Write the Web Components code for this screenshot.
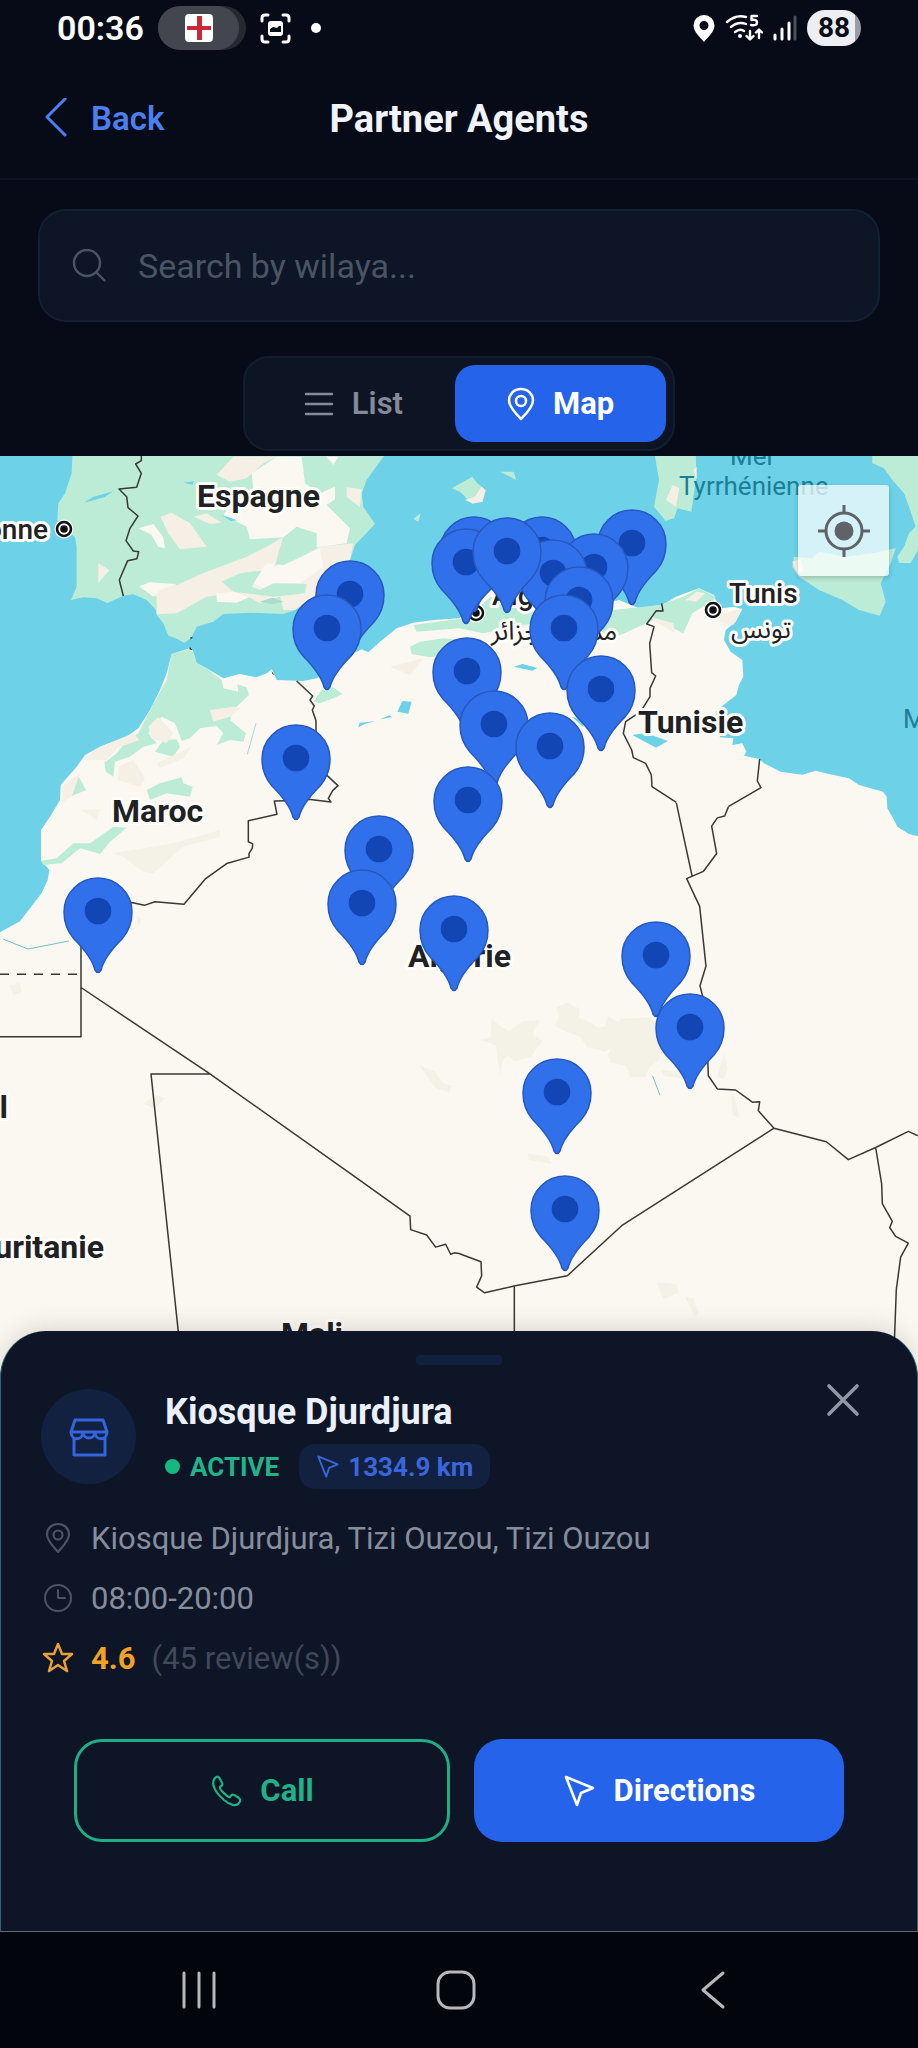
<!DOCTYPE html>
<html lang="en">
<head>
<meta charset="utf-8">
<meta name="viewport" content="width=device-width, initial-scale=1">
<title>Partner Agents</title>
<style>
  html, body { margin: 0; height: 100%; }
  body { background: #060b17; color: #eef2ff; font-family: Roboto, "Liberation Sans", "DejaVu Sans", sans-serif; }
</style>
</head>
<body>
<app-screen>
  <status-bar slot="status" time="00:36" battery="88"></status-bar>
  <page-header slot="header">Partner Agents</page-header>
  <search-field slot="tools" placeholder="Search by wilaya..."></search-field>
  <view-toggle slot="tools"></view-toggle>
  <coverage-map slot="map"></coverage-map>
  <agent-sheet slot="sheet">
    <span slot="name">Kiosque Djurdjura</span>
    <span slot="status">ACTIVE</span>
    <span slot="distance">1334.9 km</span>
    <span slot="address">Kiosque Djurdjura, Tizi Ouzou, Tizi Ouzou</span>
    <span slot="hours">08:00-20:00</span>
    <span slot="rating">4.6</span>
    <span slot="reviews">(45 review(s))</span>
  </agent-sheet>
  <nav-bar slot="nav"></nav-bar>
</app-screen>

<script>
const BASE = `
  :host, *, *::before, *::after { box-sizing: border-box; }
  svg { display: block; flex: none; }
  button { font: inherit; color: inherit; background: none; border: 0; padding: 0; margin: 0; cursor: pointer; }
  .line { fill: none; stroke: currentColor; stroke-linecap: round; stroke-linejoin: round; }
`;
function define(name, render, setup) {
  customElements.define(name, class extends HTMLElement {
    constructor() {
      super();
      const root = this.attachShadow({ mode: 'open' });
      const t = document.createElement('template');
      t.innerHTML = `<style>${BASE}</style>` + render(this);
      root.append(t.content.cloneNode(true));
      if (setup) setup(root, this);
    }
  });
}

define('app-screen', () => `
  <style>
    :host { display: flex; flex-direction: column; min-height: 100vh; }
    .tools { display: flex; flex-direction: column; align-items: center; gap: 34px; padding: 29px 38px 5px; }
    .stage { flex: 1; display: grid; grid-template: minmax(0, 1fr) / minmax(0, 1fr); overflow: hidden; }
    ::slotted([slot=map]), ::slotted([slot=sheet]) { grid-area: 1 / 1; }
    ::slotted([slot=sheet]) { align-self: end; z-index: 1; }
  </style>
  <slot name="status"></slot>
  <slot name="header"></slot>
  <div class="tools"><slot name="tools"></slot></div>
  <main class="stage"><slot name="map"></slot><slot name="sheet"></slot></main>
  <slot name="nav"></slot>
`);

define('status-bar', el => `
  <style>
    :host { display: flex; justify-content: space-between; align-items: center; height: 56px; padding: 0 57px; color: #fff; }
    .group { display: flex; align-items: center; }
    time { font-size: 34px; font-weight: 600; line-height: 40px; width: 101px; }
    .pill { display: flex; width: 88px; height: 44px; border-radius: 22px; background: #262932; margin-right: 14px; }
    .pill div { width: 81px; border-radius: 22px; background: #44464f; display: grid; place-items: center; }
    .dot { width: 10px; height: 10px; border-radius: 50%; background: #fff; margin-left: 20px; }
    .right { gap: 10px; }
    .battery { width: 54px; height: 36px; border-radius: 18px; display: grid; place-items: center; color: #0a0d16;
      background: linear-gradient(90deg, #eceef3 88%, #9b9da5 88%); font-size: 28px; font-weight: 700; line-height: 36px; }
  </style>
  <div class="group">
    <time>${el.getAttribute('time')}</time>
    <div class="pill"><div>
      <svg width="28" height="28" viewBox="0 0 28 28"><rect width="28" height="28" rx="4" fill="#fdfdfd"/><path d="M12 2h5v10h9v4h-9v10h-5V16H2v-4h10z" fill="#c9273a"/></svg>
    </div></div>
    <svg width="31" height="31" viewBox="0 0 31 31"><g class="line" stroke-width="3"><path d="M2 8V5q0-3 3-3h3M23 2h3q3 0 3 3v3M29 23v3q0 3-3 3h-3M8 29H5q-3 0-3-3v-3"/></g><rect x="8" y="8" width="15" height="15" rx="3" fill="#fff"/><path d="M10 19v-3l3-2 4 1 2-2h2v6z" fill="#0a0f1c"/></svg>
    <div class="dot"></div>
  </div>
  <div class="group right">
    <svg width="22" height="27" viewBox="0 0 22 27"><path fill="#fff" fill-rule="evenodd" d="M11 0a10.500 10.500 0 0 1 10.500 10.500C21.500 17 15 22 11 27 7 22 .5 17 .5 10.500A10.500 10.500 0 0 1 11 0zm0 6a4.500 4.500 0 1 0 0 9 4.500 4.500 0 0 0 0-9z"/></svg>
    <svg width="38" height="28" viewBox="0 0 38 28"><g class="line" stroke-width="2.400"><path d="M2 8q9-8 19-5M6 13q7-6 15-3M10 18q5-4 9-1"/><path d="M32 2h-5.500v4q5.500-1 5.500 2.500T26 11"/><path d="M25 17v8M21.500 22l3.500 3.500 3.500-3.500M34 24v-8M31 18.500 34 15.500l3 3"/></g><circle cx="15" cy="22" r="2" fill="#fff"/></svg>
    <svg width="24" height="26" viewBox="0 0 24 26"><g stroke-width="3" stroke-linecap="round" stroke="#fff"><path d="M2 20v4M9 14v10M16 8v16"/><path d="M22 2v22" stroke="#4c505b"/></g></svg>
    <div class="battery">${el.getAttribute('battery')}</div>
  </div>
`);

define('page-header', () => `
  <style>
    :host { display: grid; grid-template-columns: 1fr auto 1fr; align-items: center; height: 124px; padding: 4px 38px 0; border-bottom: 2px solid #0b1522; }
    button { display: flex; align-items: center; gap: 24px; padding-left: 6px; justify-self: start; color: #4b7ff0; font-size: 33px; font-weight: 600; line-height: 40px; }
    h1 { margin: 0; font-size: 38px; font-weight: 700; line-height: 44px; color: #f1f4ff; }
  </style>
  <button type="button"><svg width="23" height="42" viewBox="0 0 23 42"><path class="line" stroke-width="3" d="M21 1 3 19l18 18"/></svg>Back</button>
  <h1><slot></slot></h1>
`);

define('search-field', el => `
  <style>
    :host { display: block; align-self: stretch; }
    label { display: flex; align-items: center; gap: 32px; height: 113px; padding: 0 32px; border: 2px solid #132034; border-radius: 28px; background: #0d1526; color: #4b5465; }
    input { flex: 1; min-width: 0; border: 0; padding: 0; background: none; outline: none; font: inherit; font-size: 34px; line-height: 40px; height: 44px; color: #eef2ff; }
    input::placeholder { color: #4b5465; opacity: 1; }
  </style>
  <label><svg width="34" height="34" viewBox="0 0 34 34"><g class="line" stroke-width="2.400"><circle cx="15" cy="14" r="13"/><path d="m24.500 23.500 8 8"/></g></svg>
  <input type="search" aria-label="Search by wilaya" placeholder="${el.getAttribute('placeholder')}"></label>
`);

define('view-toggle', () => `
  <style>
    :host { display: flex; height: 95px; padding: 7px; border: 2px solid #121d32; border-radius: 26px; background: #0d1424; }
    button { display: flex; align-items: center; justify-content: center; gap: 18px; padding: 0 52px; border-radius: 20px; font-size: 31px; font-weight: 600; line-height: 40px; color: #848a98; }
    [aria-pressed=true] { background: #2563eb; color: #fff; font-weight: 700; }
  </style>
  <button type="button" aria-pressed="false"><svg width="30" height="26" viewBox="0 0 30 26"><path class="line" stroke-width="2.500" d="M2 3h26M2 13h26M2 23h26"/></svg>List</button>
  <button type="button" aria-pressed="true"><svg width="28" height="34" viewBox="0 0 28 34"><g class="line" stroke-width="2.500"><path d="M14 2c7 0 12 5 12 11.500C26 20 19 27 14 32 9 27 2 20 2 13.500 2 7 7 2 14 2z"/><circle cx="14" cy="14" r="5"/></g></svg>Map</button>
`, root => {
  const tabs = root.querySelectorAll('button');
  tabs.forEach(b => b.addEventListener('click', () => tabs.forEach(o => o.setAttribute('aria-pressed', o === b))));
});

/* Tip of each agent marker in map units, back to front. */
const PINS = [[350,656],[327,690],[474,612],[542,612],[632,605],[594,629],[466,624],[553,635],[507,613],[579,662],[564,690],[467,733],[601,751],[494,786],[550,808],[296,820],[468,862],[379,911],[362,965],[98,973],[454,991],[656,1017],[690,1089],[557,1154],[565,1271]];

define('coverage-map', () => `
  <style>
    :host { display: grid; position: relative; overflow: hidden; background: #fbf8f1; min-height: 0; }
    .canvas { position: absolute; inset: 0; width: 100%; height: 100%; }
    text { fill: #202124; stroke: #fffdf9; stroke-width: 6px; stroke-linejoin: round; paint-order: stroke; font-size: 32px; font-weight: 500; }
    .country { font-weight: 700; }
    .city { font-size: 28px; }
    .ar { font-size: 26px; font-weight: 400; font-family: "Noto Sans Arabic", "Noto Sans", "DejaVu Sans", sans-serif; }
    .water { fill: #1c7f95; stroke: none; font-size: 26px; font-weight: 400; }
    .end { text-anchor: end; }
    .sea { fill: #6dd1e8; } .green { fill: #bcecd6; } .sand { fill: #f5efe5; } .land { fill: #fbf8f1; } .dune { fill: #f4f1e6; }
    .border path { fill: none; stroke: #3b3734; stroke-width: 1.500px; vector-effect: non-scaling-stroke; stroke-linejoin: round; }
    .locate { position: absolute; top: 29px; right: 29px; width: 91px; height: 91px; display: grid; place-items: center; background: #ffffffb8; border-radius: 3px; box-shadow: 0 2px 5px #0003; color: #5f6368; }
  </style>
  <svg class="canvas" viewBox="0 456 918 1476" preserveAspectRatio="xMidYMin slice" role="img" aria-label="Map of partner agents in Algeria">
    <defs><g id="pin">
      <path fill="#3170eb" stroke="#2659bd" stroke-width="1.500" d="M-3-3C-6-15-15-25-24-34-31-42-34-51-34-61A34 34 0 0 1 34-61C34-51 31-42 24-34 15-25 6-15 3-3Q0 2-3-3Z"/><circle cy="-62" r="13.300" fill="#1146b4"/></g>
      <g id="town"><circle r="7" fill="#fff" stroke="#fff" stroke-width="5"/><circle r="7" fill="#fff" stroke="#111" stroke-width="2.600"/><circle r="3.800" fill="#111"/></g></defs>
    <g transform="translate(0 450) scale(.33333)">
      <path class="sea" d="M0 0H2754V1159L2727 1152 2692 1130 2677 1100 2662 1075 2660 1040 2649 1025 2577 1005 2547 985 2487 972 2447 962 2407 974 2342 965 2292 940 2277 927 2232 917 2239 905 2227 880 2197 885 2200 865 2160 862 2147 785 2177 760 2209 735 2217 705 2230 680 2227 630 2192 605 2172 570 2177 540 2207 515 2227 478 2202 470 2167 475 2147 450 2142 435 2097 415 2027 440 1997 460 1982 465 1917 475 1857 450 1777 470 1577 430 1472 420 1377 505 1300 510 1240 518 1190 535 1140 575 1105 607 1085 598 1050 615 950 685 910 693 830 690 816 658 800 670 770 682 720 672 670 685 620 655 590 640 578 600 570 595 515 612 500 670 480 720 450 780 415 835 380 860 300 890 255 915 230 950 182 1005 180 1050 150 1100 123 1140V1232L148 1259 143 1291 125 1329 60 1414 0 1447Z"/>
      <path class="green" d="M218 0 215 70 195 130 175 160 172 210 225 262 230 290V410L213 450 250 442 290 445 322 459 370 437 400 433 440 450 468 480 470 495 490 520 505 557 530 566 553 578 573 565 590 530 640 515 670 492 750 488 850 492 885 480 940 440 1050 330 1065 285 1125 222 1090 170 1085 130 1100 90 1165 0Z"/>
      <path class="sand" d="M650 75 700 20H830L790 40 740 85 690 95ZM1040 112 1085 118 1080 172 1040 140ZM482 200 515 188 570 220 620 290 540 298 505 250ZM580 200 620 190 665 218 630 222ZM418 412 450 395 530 405 620 365 740 320 800 290 850 260 835 310 820 370 870 340 960 290 1060 280 1050 330 940 440 885 480 850 480 840 440 780 460 735 435 700 430 620 440 530 490 470 493 470 440Z"/>
      <path class="land" d="M755 70 830 20H905L915 100 960 130 1005 110V148L980 165 1050 235 1040 280 950 292 950 250 890 230 850 262 750 268 740 230 670 195 700 150 760 120ZM415 235 460 222 490 262 495 295 475 290 455 255ZM418 408 450 398 530 402 480 420 460 440ZM752 395 800 340 850 345 960 295 970 350 900 400 830 400 810 425ZM980 20H1015L1000 45ZM650 430 700 425 750 440 710 458 650 455Z"/>
      <path class="green" d="M665 395 720 370 785 362 770 385 755 410 780 420 820 400 920 402 915 430 870 435 820 440 700 425ZM820 350 850 320 870 260 905 250 925 290 880 310 830 345Z"/>
      <path class="sand" d="M295 340 328 360 295 400Z"/>
      <path fill="#a9dcc9" d="m778 455 38-12 35 12-35 8z"/>
      <path class="sea" d="m252 158 28-18 60-16-28 18zM552 98l30-4-4 10zM665 195l48 16-20 2z"/>
      <path class="green" d="M515 612 570 597 580 610 590 640 620 655 665 690 670 715 715 725 712 703 740 712 747 735 700 780 690 810 738 850 730 875 690 870 650 885 670 850 650 828 600 835 570 865 545 872 525 820 485 800 445 850 470 880 430 890 390 920 345 935 340 980 318 965 313 938 350 910 380 870 415 850 450 780 500 690ZM465 905 490 870 530 868 540 890 520 920ZM440 1020 480 1000 545 982 550 1000 578 1010 570 1040 500 1030 450 1050ZM235 978 258 1020 215 1038ZM123 1232 170 1225 220 1180 270 1180 340 1130 380 1133 330 1175 300 1212 240 1195 185 1240 130 1245ZM1230 590 1260 575 1330 565 1377 570V610L1290 622 1235 612ZM940 755 965 720 1000 712 1027 732 1000 745 960 760ZM1240 525 1377 507 1400 505 1472 440 1550 470 1650 500 1980 465 2050 440 2097 415 2147 440 2142 450 2077 490 2050 550 2030 540 1960 510 1850 560 1750 550 1600 520 1450 550 1377 535 1250 545Z"/>
      <path class="sand" d="M630 780 700 770 720 775 690 800 640 815ZM445 830 475 800 520 850 500 880 455 865ZM355 950 400 930 435 985 420 1010 355 990ZM300 890 400 850 418 870 350 895 320 930 250 930ZM190 1005 240 970 215 1038 185 1060ZM1170 650 1270 625 1230 675ZM1950 500 2020 520 2025 550 1960 510ZM2055 450 2090 425 2115 430 2090 455ZM2160 495 2227 475 2200 525 2160 520Z"/>
      <path class="dune" d="M470 940 575 890 550 925 480 955ZM245 1080 300 1078 290 1110ZM340 1210 520 1180 660 1140 660 1160 550 1190 460 1270 430 1265 370 1220Z"/>
      <path class="sea" d="m1075 832 4-14 45-4-30 8zM1140 808l28-12 8 6zM1192 785l15-32 28 2-10 36zM1542 650l25-8 45 12-15 8zM1897 855l40-6 67 24-36 20zM1715 800l32 10 4 22z"/>
      <path d="m768 820-26 93" stroke="#7fc5c5" stroke-width="2"/>
      <path fill="#203438" d="m572 560 7 3-8 5zm-2 31 8 10-10-3zm245 72 8 12-6-3z"/>
      <path class="green" d="M1962 0 1977 90 1962 170 1997 212 2022 205 2032 175 2074 185 2089 80 2087 0ZM2617 0V40L2652 55 2677 90 2712 130 2727 170 2747 230 2727 250 2712 290 2692 320 2697 338 2732 340 2754 300V0ZM2377 350 2382 320 2437 325 2457 305 2537 320 2617 310 2687 295 2672 340 2642 400 2657 455 2639 497 2577 480 2527 450 2457 420 2397 380ZM1355 115 1417 80 1432 100 1457 120 1447 155 1417 162 1380 125ZM1499 65H1540L1549 90ZM1240 207 1262 190 1255 215Z"/>
      <path class="sand" d="m1998 150 20-45 20 10-10 55zM2377 335l25-8 10 35-20 10zM1417 160l-22-10 30-10 20-30 12 12-10 33zM2080 60l10-10v40z"/>
    </g>
    <g transform="translate(0 800) scale(.33333 .35714)">
      <path class="dune" d="m1260 745 45 15 20 30 30 10-10 20-40-15zM430 850l40-25 25 10-30 30zM30 520l30-8 5 25-25 10zM410 325l15 8-10 20z"/>
    </g>
    <g transform="translate(459 980) scale(.33333)">
      <path class="dune" d="m65 180 30-8 2-56 30 24 24 12 40-28 50-4-20 42 30 22-20 24-14 22-50 14-20-18-18 18-4 46-10-52-4-42-20-8zM288 138l12-28-8-28 34-14 36 18-2 28 32 12 26 18 20-6 8-30 32 18 8-10 90-4 24 44 4 80-32 26-12 28-46 2-14-36-44-8-10-22 10-22-18 12-24-10-30-4-20-32-48-18zM605 270l70 8 20 20-80-10zM775 290l20-70 12 46-14 32zM815 345l12 5 14 64-20-10z"/>
      <path d="m581 288 22 58" stroke="#76bfc2" stroke-width="3"/>
    </g>
    <g transform="translate(459 800) scale(.33333 .35714)">
      <path class="dune" d="m205 990 60 8 15 22-70-12zM593 1350l60 5 5 25-45 18zM678 1390l25 5 15 40-10 12z"/>
    </g>
    <path d="m3 939 25 10 41-8" fill="none" stroke="#76bfc2"/>
    <g class="border" transform="translate(0 450) scale(.33333)">
      <path d="M424 0V32L407 42 424 70 410 112 357 117 380 140 384 173 414 198 390 235 378 272 400 303 416 305 411 326 383 332 358 390 370 438M890 693 938 738 930 750 943 768 937 780 948 812V940L985 980 1014 1007 998 1022 985 1045 993 1056 925 1048 858 1050"/>
      <path d="M1985 460 1989 483 1969 482 1940 522 1962 530 1949 580 1955 668 1967 678 1950 715V740L1922 785 1877 815 1870 850 1895 900 1900 923 1937 940 1954 975 1956 1010 2029 1057M2279 927 2272 993 2283 1013 2185 1070"/>
    </g>
    <g class="border" transform="translate(0 800) scale(.33333 .35714)">
      <path d="M858 2 823 3 831 40 745 58V117L758 123 757 135 747 150V160L680 178 617 220 552 292 465 285 433 295 395 287 243 290V663H0M243 525 630 767 1080 1065 1230 1165 1232 1203 1280 1218 1307 1252 1337 1244 1352 1272 1363 1268 1377 1270 1443 1293 1445 1332 1430 1364 1454 1380 1542 1361 1702 1332 1865 1192 2322 919 2275 870 2279 845 2257 846 2207 812 2152 809 2125 772 2122 700 2108 550 2100 520 2118 465 2099 298 2060 220 2110 200 2150 150 2135 73 2152 50 2174 45 2185 20M2029 8 2076 212M630 767H453L535 1490M1543 1361V1500M2322 919 2479 957 2545 1007 2627 973 2725 928 2754 940M2627 973 2645 1075 2647 1130 2677 1180 2669 1197 2687 1222 2725 1241 2702 1280 2689 1370 2683 1520"/>
      <path stroke-dasharray="9 8" d="M0 488H243"/>
    </g>
    <text class="country" x="197" y="507">Espagne</text>
    <text class="city end" x="48" y="539">Lisbonne</text>
    <use href="#town" x="64" y="529"/>
    <text class="water" x="730" y="465">Mer</text>
    <text class="water" x="679" y="495">Tyrrhénienne</text>
    <text class="water" x="903" y="728">Mer</text>
    <text class="city" x="492" y="605">Alger</text>
    <text class="ar" x="491" y="640">مدينة الجزائر</text>
    <use href="#town" x="476" y="613"/>
    <text class="city" x="729" y="603">Tunis</text>
    <text class="ar" x="731" y="638">تونس</text>
    <use href="#town" x="713" y="610"/>
    <text class="country" x="638" y="733">Tunisie</text>
    <text class="country" x="112" y="822">Maroc</text>
    <text class="country" x="408" y="967">Algérie</text>
    <text class="country end" x="8" y="1118">Sahara occidental</text>
    <text class="country end" x="104" y="1258">Mauritanie</text>
    <text class="country" x="281" y="1345">Mali</text>
    ${PINS.map(([x, y]) => `<use href="#pin" x="${x}" y="${y}"/>`).join('')}
  </svg>
  <button class="locate" type="button" aria-label="My location">
    <svg width="52" height="52" viewBox="0 0 52 52"><g fill="none" stroke="currentColor" stroke-width="3"><circle cx="26" cy="26" r="18"/><path d="M26 0v9M26 43v9M0 26h9M43 26h9"/></g><circle cx="26" cy="26" r="9.500" fill="currentColor"/></svg>
  </button>
`);

const ARROW = '<path class="line" d="M3 3 30 14 18 19 14 31Z"/>';
define('agent-sheet', () => `
  <style>
    :host { display: block; padding: 24px 40px 89px; background: #0e1526; border: solid; border-width: 0 1px 1px; border-color: #2d6379 #2d6379 #5e6b75; border-radius: 46px 46px 0 0; box-shadow: 0 -4px 24px #0002; }
    .handle { width: 86px; height: 10px; border-radius: 4px; background: #11203f; margin: 0 auto 24px; }
    .head { display: flex; align-items: flex-start; }
    .avatar { width: 95px; height: 95px; border-radius: 50%; background: #12213f; display: grid; place-items: center; color: #3465dc; }
    .who { flex: 1; margin-left: 29px; }
    h2 { margin: 0; font-size: 36px; font-weight: 700; line-height: 46px; color: #eaf0ff; }
    .tags { display: flex; align-items: center; gap: 20px; margin-top: 9px; font-size: 26px; line-height: 32px; }
    .state { display: flex; align-items: center; gap: 10px; color: #22b38a; font-weight: 700; }
    .state i { width: 15px; height: 15px; border-radius: 50%; background: #14b981; }
    .chip { display: flex; align-items: center; gap: 8px; height: 45px; padding: 0 17px; border-radius: 16px; background: #12213f; color: #3a66da; font-weight: 700; }
    .close { width: 48px; height: 34px; display: grid; place-items: center; color: #9097a7; margin: -6px 10px 0 0; }
    ul { list-style: none; margin: 20px 0 0; padding: 0; font-size: 31px; line-height: 40px; color: #868d9d; }
    li { display: flex; align-items: center; gap: 16px; height: 60px; }
    li svg { width: 34px; height: 34px; color: #4b5466; }
    li .star { color: #e9a036; }
    b { font-weight: 700; color: #f0a326; }
    small { font-size: inherit; color: #404859; }
    .actions { display: flex; gap: 24px; margin: 50px 33px 0; }
    .actions button { flex: 1 1 0; display: flex; align-items: center; justify-content: center; gap: 18px; height: 103px; border-radius: 28px; font-size: 31px; font-weight: 700; line-height: 40px; }
    .call { border: 3px solid #20ad85; color: #1fb287; }
    .go { background: #2563eb; color: #fff; }
  </style>
  <div class="handle"></div>
  <div class="head">
    <div class="avatar"><svg width="42" height="40" viewBox="0 0 42 40"><g class="line" stroke-width="3"><path d="M7 3h28l4 12H3zM3 15c0 9 12 9 12 0 0 8 12 8 12 0 0 9 12 9 12 0M6 21v17h31V21"/></g></svg></div>
    <div class="who">
      <h2><slot name="name"></slot></h2>
      <div class="tags">
        <span class="state"><i></i><slot name="status"></slot></span>
        <span class="chip"><svg width="24" height="25" viewBox="0 0 33 34" stroke-width="2.500">${ARROW}</svg><slot name="distance"></slot></span>
      </div>
    </div>
    <button class="close" type="button" aria-label="Close"><svg width="34" height="34" viewBox="0 0 34 34"><path class="line" stroke-width="3.600" d="m3 3 28 28M31 3 3 31"/></svg></button>
  </div>
  <ul>
    <li><svg viewBox="0 0 34 34"><g class="line" stroke-width="2.200"><path d="M17 2c6 0 11 4 11 10.500C28 19 21 25 17 30 13 25 6 19 6 12.500 6 6 11 2 17 2z"/><circle cx="17" cy="13" r="4.500"/></g></svg><slot name="address"></slot></li>
    <li><svg viewBox="0 0 34 34"><g class="line" stroke-width="2"><circle cx="17" cy="16" r="13"/><path d="M17 8v8h7"/></g></svg><slot name="hours"></slot></li>
    <li><svg class="star" viewBox="0 0 34 34"><path class="line" stroke-width="2.500" d="m17 2 4 10h10l-8 7 3 10-9-6-9 6 3-10-8-7h10z"/></svg><b><slot name="rating"></slot></b><small><slot name="reviews"></slot></small></li>
  </ul>
  <div class="actions">
    <button class="call" type="button"><svg width="32" height="32" viewBox="0 0 32 32"><path class="line" stroke-width="2.200" d="M5 3C8 0 9 2 11 6c2 3 2 4-1 6-1 2 8 11 10 10 2-3 3-3 6-1 5 3 5 4 3 7-3 4-9 2-15-3C6 18 0 9 5 3z"/></svg>Call</button>
    <button class="go" type="button"><svg width="33" height="34" viewBox="0 0 33 34" stroke-width="2.600">${ARROW}</svg>Directions</button>
  </div>
`);

define('nav-bar', () => `
  <style>
    :host { display: grid; grid-template-columns: repeat(3, 1fr); height: 116px; padding: 0 76px 0 70px; background: #03050c; color: #b7b8bc; }
    button { display: grid; place-items: center; }
  </style>
  <button type="button" aria-label="Recent apps"><svg width="38" height="40" viewBox="0 0 38 40"><path class="line" stroke-width="3" d="M4 3v34M19 3v34M34 3v34"/></svg></button>
  <button type="button" aria-label="Home"><svg width="40" height="40" viewBox="0 0 40 40"><rect class="line" stroke-width="3" x="2" y="2" width="36" height="36" rx="12"/></svg></button>
  <button type="button" aria-label="Back"><svg width="26" height="40" viewBox="0 0 26 40"><path class="line" stroke-width="3" d="M23 3 3 20l20 17"/></svg></button>
`);
</script>
</body>
</html>
